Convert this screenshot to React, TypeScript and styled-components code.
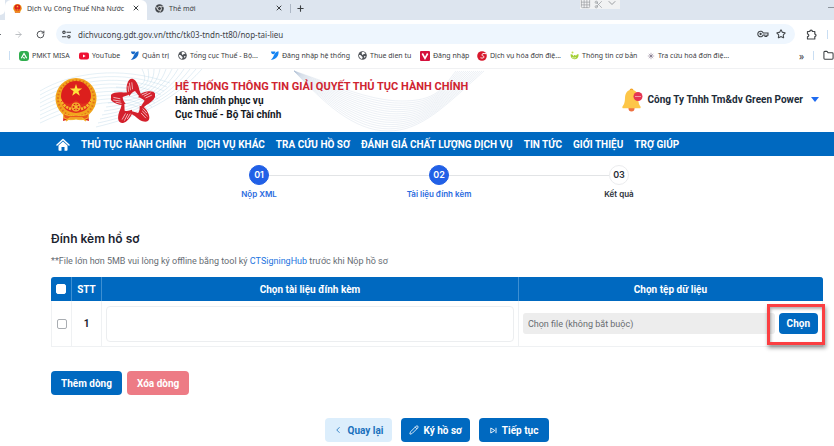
import React from "react";
import styled, { createGlobalStyle } from "styled-components";
import {
  ChevronDown,
  ChevronLeft,
  Folder,
  Pencil,
  Plus,
  RotateCw,
  Star,
  X,
  ArrowRight,
  Scissors,
  Grid3x3,
} from "lucide-react";

const BLUE = "#0069c0";
const ACCENT = "#2160e6";
const UI_FONT = '"Noto Sans", sans-serif';
const PAGE_FONT = 'Roboto, sans-serif';
const TITLE_FONT = 'Inter, sans-serif';

const GlobalStyle = createGlobalStyle`
  * { box-sizing: border-box; }
  body { margin: 0; background: #fff; font-family: ${PAGE_FONT}; color: #1c2430; overflow-x: hidden; }
  button, input { font-family: inherit; }
  button { cursor: pointer; border: 0; padding: 0; background: none; color: inherit; }
  a { text-decoration: none; color: inherit; }
  svg { display: block; flex: none; }
`;

/* ---------- browser frame ---------- */

const TabStrip = styled.div`
  position: relative;
  display: flex;
  align-items: stretch;
  height: 20px;
  background: #dde5ef;
  font-family: ${UI_FONT};
  font-size: 7px;
  color: #3c4043;
`;

const TabEdge = styled.div`
  width: 5px;
  background: #fff;
  border-radius: 0 0 5px 0;
  height: 15px;
`;

const Tab = styled.div<{ $active?: boolean }>`
  display: flex;
  align-items: center;
  gap: 5px;
  width: ${(p) => (p.$active ? 142 : 143)}px;
  padding: 0 7px 4px 8px;
  background: ${(p) => (p.$active ? "#fff" : "transparent")};
  border-radius: 6px 6px 0 0;
  white-space: nowrap;
`;

const TabTitle = styled.span`
  flex: 1;
`;

const TabDivider = styled.span`
  width: 1px;
  height: 9px;
  margin: 4px 5px 0 0;
  background: #aeb8c6;
`;

const IconButton = styled.button`
  display: flex;
  align-items: center;
  justify-content: center;
`;

const NewTab = styled(IconButton)`
  height: 16px;
`;

const CaptureTools = styled.div`
  position: absolute;
  top: 0;
  right: 214px;
  display: flex;
  align-items: flex-end;
  gap: 3px;
  width: 40px;
  height: 9px;
  overflow: hidden;
  background: #f1f2f3;
  color: #9a9da1;
`;

const MinimizeMark = styled.span`
  position: absolute;
  right: 0;
  top: 7px;
  width: 6px;
  height: 1px;
  background: #8d949c;
`;

const AddressRow = styled.div`
  display: flex;
  align-items: center;
  height: 28px;
  font-family: ${UI_FONT};
  color: #45494d;
`;

const NavButtons = styled.div`
  display: flex;
  align-items: center;
  gap: 13px;
  width: 56px;
`;

const BackEdge = styled.span`
  width: 1px;
  height: 1px;
  background: #6b7075;
`;

const AddressBar = styled.div`
  flex: 1;
  display: flex;
  align-items: center;
  gap: 7px;
  height: 20px;
  padding: 0 9px 0 6px;
  border-radius: 10px;
  background: #eef6fe;
`;

const AddressInput = styled.input`
  flex: 1;
  min-width: 0;
  padding: 0;
  border: 0;
  background: none;
  font-size: 8px;
  color: #3f4347;
  outline: none;
`;

const AddressSide = styled.div`
  display: flex;
  align-items: center;
  gap: 10px;
  width: 39px;
  padding-left: 11px;
`;

const VBar = styled.span`
  width: 1px;
  height: 9px;
  background: #c9def3;
`;

const BookmarkBar = styled.nav`
  display: flex;
  align-items: center;
  height: 15px;
  padding-left: 9px;
  font-family: ${UI_FONT};
  font-size: 7px;
  color: #3c4043;
`;

const BookmarkList = styled.div`
  display: flex;
  margin-left: 9px;
`;

const Bookmark = styled.a<{ $slot: number }>`
  display: flex;
  align-items: center;
  gap: 3px;
  width: ${(p) => p.$slot}px;
  white-space: nowrap;
`;

const BookmarkEnd = styled.div`
  display: flex;
  align-items: center;
  gap: 9px;
  margin-left: auto;
  font-size: 10px;
`;

/* ---------- site header ---------- */

const Header = styled.header`
  position: relative;
  display: flex;
  align-items: center;
  height: 64px;
  margin-top: 5px;
  padding: 0 15px 0 54px;
  border-top: 1px solid #f0f1f3;
`;

const WaveLayer = styled.div`
  position: absolute;
  inset: 0;
  overflow: hidden;
  pointer-events: none;
`;

const Logos = styled.div`
  position: relative;
  display: flex;
  gap: 13px;
  width: 121px;
`;

const SiteName = styled.div`
  position: relative;
  flex: 1;
  font-size: 10px;
  line-height: 14px;
  font-weight: 700;
  color: #14181e;
  white-space: nowrap;
`;

const SiteTitle = styled.h1`
  margin: 0;
  font-size: 11px;
  line-height: 14px;
  font-weight: 700;
  color: #cf2430;
`;

const Account = styled.button`
  position: relative;
  display: flex;
  align-items: center;
  gap: 5px;
  padding-bottom: 2px;
  font-size: 10px;
  font-weight: 700;
  color: #222c39;
  white-space: nowrap;
`;

const Caret = styled.span`
  margin-left: 3px;
  border: 4px solid transparent;
  border-top: 5px solid #1f6bf0;
  border-bottom: 0;
`;

const MainNav = styled.nav`
  display: flex;
  align-items: center;
  gap: 11px;
  height: 24px;
  padding-left: 56px;
  background: ${BLUE};
  color: #fff;
  font-size: 10px;
  font-weight: 700;
  white-space: nowrap;
`;

/* ---------- page body ---------- */

const Main = styled.main`
  padding: 9px 11px 0 51px;
`;

const Steps = styled.ol`
  display: grid;
  grid-template-columns: repeat(3, 180px);
  justify-content: center;
  margin: 0;
  padding: 0 0 0 4px;
  list-style: none;
  font-family: ${TITLE_FONT};
`;

const Step = styled.li<{ $done: boolean }>`
  display: grid;
  grid-template-columns: 1fr auto 1fr;
  align-items: center;
  row-gap: 3px;
  text-align: center;
  font-size: 8px;
  line-height: 12px;
  font-weight: 600;
  color: ${(p) => (p.$done ? "#2a6be0" : "#2a3038")};
`;

const StepLine = styled.span<{ $hidden?: boolean }>`
  height: 1px;
  background: ${(p) => (p.$hidden ? "transparent" : "#e2e4e6")};
`;

const StepDot = styled.span<{ $done: boolean }>`
  display: flex;
  align-items: center;
  justify-content: center;
  width: 20px;
  height: 20px;
  border-radius: 50%;
  font-size: 9px;
  background: ${(p) => (p.$done ? ACCENT : "#fff")};
  border: 1px solid ${(p) => (p.$done ? ACCENT : "#ebecee")};
  color: ${(p) => (p.$done ? "#fff" : "#2a3038")};
`;

const StepLabel = styled.span`
  grid-column: 1 / -1;
`;

const SectionTitle = styled.h2`
  margin: 31px 0 0;
  font-family: ${TITLE_FONT};
  font-size: 12px;
  line-height: 16px;
  font-weight: 600;
`;

const Note = styled.p`
  margin: 7px 0 9px;
  font-size: 9px;
  line-height: 14px;
  color: #666c73;
  a { color: #1d74e0; }
`;

const FileTable = styled.table`
  width: 100%;
  table-layout: fixed;
  border-collapse: separate;
  border-spacing: 0;
  font-size: 10px;
  font-weight: 700;
`;

const HeadCell = styled.th<{ $width?: string }>`
  width: ${(p) => p.$width ?? "auto"};
  height: 24px;
  padding: 0;
  background: ${BLUE};
  color: #fff;
  border-right: 1px solid #3d8fd2;
  &:first-child { border-top-left-radius: 3px; }
  &:last-child { border-top-right-radius: 3px; border-right-color: ${BLUE}; }
`;

const Cell = styled.td`
  height: 46px;
  padding: 0 4px;
  text-align: center;
  border-right: 1px solid #eff1f3;
  border-bottom: 1px solid #eff1f3;
  &:first-child { border-left: 1px solid #eff1f3; }
`;

const CheckBox = styled.input<{ $light?: boolean }>`
  appearance: none;
  display: block;
  width: 10px;
  height: 10px;
  margin: 0 auto;
  border: 1px solid ${(p) => (p.$light ? "#fff" : "#a9adb2")};
  border-radius: 2px;
  background: #fff;
  &:checked { background: #5b9bd8; }
`;

const DocInput = styled.input`
  display: block;
  width: 100%;
  height: 36px;
  border: 1px solid #eceef0;
  border-radius: 4px;
  background: #fff;
`;

const FilePicker = styled.div`
  display: flex;
  align-items: center;
`;

const FileInput = styled.input`
  flex: 1;
  min-width: 0;
  height: 21px;
  padding: 0 5px;
  border: 0;
  border-radius: 3px;
  background: #ededed;
  font-size: 9px;
  &::placeholder { color: #686c70; opacity: 1; }
`;

const ChooseWrap = styled.div`
  position: relative;
  padding-left: 4px;
`;

const Button = styled.button<{ $tone?: "primary" | "danger" | "soft"; $height?: number; $pad?: number }>`
  display: inline-flex;
  align-items: center;
  justify-content: center;
  gap: 5px;
  height: ${(p) => p.$height ?? 24}px;
  padding: 0 ${(p) => p.$pad ?? 10}px;
  border-radius: 4px;
  font-size: 10px;
  font-weight: 700;
  white-space: nowrap;
  color: ${(p) => (p.$tone === "soft" ? "#1a71bd" : "#fff")};
  background: ${(p) => (p.$tone === "danger" ? "#ed7b85" : p.$tone === "soft" ? "#dceefc" : BLUE)};
`;

const Highlight = styled.span`
  position: absolute;
  inset: -9px -7px -11px -8px;
  border: 3px solid #fb3f42;
  box-shadow: 1px 3px 4px rgba(0, 0, 0, 0.4), inset 1px 2px 3px rgba(0, 0, 0, 0.3);
  pointer-events: none;
`;

const RowActions = styled.div`
  display: flex;
  gap: 5px;
  margin-top: 24px;
`;

const FooterActions = styled.div`
  display: flex;
  justify-content: center;
  gap: 9px;
  margin-top: 23px;
`;

/* ---------- drawings ---------- */

const starPoints = (cx: number, cy: number, r: number, inner = 0.39) =>
  Array.from({ length: 10 }, (_, i) => {
    const a = (Math.PI / 5) * i - Math.PI / 2;
    const k = i % 2 ? r * inner : r;
    return `${(cx + k * Math.cos(a)).toFixed(2)},${(cy + k * Math.sin(a)).toFixed(2)}`;
  }).join(" ");

const Emblem = ({ size = 44 }: { size?: number }) => (
  <svg width={size} height={size} viewBox="0 0 44 44" aria-hidden>
    <path d="M10 35h24l1 8-7-2h-12l-7 2z" fill="#d9231c" />
    <circle cx="22" cy="20.5" r="20.5" fill="#f1a51d" />
    <circle cx="22" cy="20.5" r="18" fill="none" stroke="#e2701b" strokeWidth="2" strokeDasharray="1.5 2" />
    <circle cx="22" cy="18" r="15" fill="#dc1f1d" />
    <polygon points={starPoints(22, 12.5, 6.5)} fill="#ffe33b" />
    <path d="M6 21c3 10 7 13 16 14 9-1 13-4 16-14-3 3-8 6-12 4l-4-3-4 3c-4 2-9-1-12-4z" fill="#e2311d" />
    <path d="M6 21c3 7 8 9 11 10M38 21c-3 7-8 9-11 10" fill="none" stroke="#f7b92b" strokeWidth="2.5" strokeDasharray="2.5 .8" />
    <g fill="none" stroke="#f7c02f" strokeWidth="1.2">
      <circle cx="22" cy="29" r="4" fill="#d9231c" />
      <path d="M18.5 26.500l7 5M25.500 26.500l-7 5M22 25v8" />
    </g>
    <path d="M9 35c4 3 8 3 13 2 5 1 9 1 13-2l-1 5c-4 2-8 2-12 1-4 1-8 1-12-1z" fill="#ea5a1d" stroke="#f5b629" strokeWidth="1" />
    <path d="M12 43l4-3h12l4 3" fill="none" stroke="#f5b629" strokeWidth="1.500" />
  </svg>
);

const HandsStar = () => (
  <svg width="44" height="46" viewBox="0 0 44 46" aria-hidden>
    {[0, 72, 144, 216, 288].map((deg) => (
      <g key={deg} transform={`rotate(${deg} 22 24.5)`}>
        <path d="M16.200 6C17.200 2 19.500 .2 22 .9C25.800 2.500 27.800 8 28.500 12.500L31 18.800L27.800 17.800L24 13C22 13.600 20 15.500 18.500 18L16 14.500C15.400 11.500 15.400 8.500 16.200 6z" fill="#d4202c" />
        <path d="M18.300 4.800l1.200 7.500M20.800 4.300l.8 7M17 7.800l.6 6" stroke="#fff" strokeWidth=".6" fill="none" />
      </g>
    ))}
  </svg>
);

const Waves = () => (
  <svg width="560" height="63" viewBox="0 0 560 63" aria-hidden>
    <g fill="none" stroke="#a9cbe0" strokeWidth=".6">
      {Array.from({ length: 11 }, (_, i) => (
        <path
          key={i}
          opacity=".55"
          d={`M${96 + i * 2} ${58 - i * 4}C${130 + i} ${50 - i * 3} ${170 - i * 2} ${36 - i * 2} ${202 - i * 6} 0`}
        />
      ))}
      {Array.from({ length: 9 }, (_, i) => (
        <path key={i} opacity=".5" d={`M40 ${22 + i * 4}C${70 + i * 3} ${4 + i * 3} ${120 + i * 2} ${-4 + i * 4} ${170 - i * 3} ${14 + i * 4}`} />
      ))}
    </g>
    <g fill="none" stroke="#b3c4d6" strokeWidth=".5">
      {Array.from({ length: 15 }, (_, i) => {
        const t = i / 14;
        return (
          <path
            key={i}
            opacity=".5"
            d={`M294 2C${330 - 6 * t} ${14 + 20 * t} ${368 - 14 * t} ${32 + 30 * t} ${402 - 14 * t} ${32 + 30 * t}S${442 + 4 * t} ${20 + 16 * t} ${456 + 28 * t} 2`}
          />
        );
      })}
    </g>
  </svg>
);

const Bell = () => (
  <svg width="21" height="24" viewBox="0 0 21 24" aria-hidden>
    <circle cx="9.500" cy="20.500" r="3" fill="#ee7040" />
    <circle cx="9.500" cy="2.500" r="2" fill="#f4a62a" />
    <path d="M9.500 2C5 2 3.300 5.500 3 10c-.2 5-1 6.500-2.500 8.500-.5 1 0 1.800 1 1.800h16c1 0 1.500-.8 1-1.800-1.500-2-2-3.500-2.300-8.500C16 5.500 14 2 9.500 2z" fill="#fdc648" />
    <circle cx="16" cy="8.500" r="4.500" fill="#e53552" />
    <path d="M13.500 8.500h5" stroke="#fff" strokeWidth="1" strokeDasharray="1 1" />
  </svg>
);

const HomeIcon = () => (
  <svg width="14" height="13" viewBox="0 0 14 13" aria-hidden>
    <path d="M1 7l6-5.500L13 7" fill="none" stroke="#fff" strokeWidth="1.500" strokeLinecap="round" strokeLinejoin="round" />
    <path d="M2.500 7.500L7 3.600l4.500 3.900V12a.7.7 0 0 1-.7.7H8.500V9h-3v3.700H3.200a.7.7 0 0 1-.7-.7z" fill="#fff" />
  </svg>
);

const GlobeIcon = () => (
  <svg width="9" height="9" viewBox="0 0 9 9" aria-hidden>
    <circle cx="4.500" cy="4.500" r="4.300" fill="#505459" />
    <path d="M1 4c1.500-.3 2.300.4 2.600 1.300.2.600 1.200.5 1 1.300L4 8C2 7.500 1 6 1 4zM4 1.200c1.500-.5 2.800.3 3.500 1.400-.8.600-2 .2-2.200 1-.3.600-1 .4-1.200-.1C3.800 2.800 3.400 2 4 1.200zM6 5l1.700.2L6.500 7z" fill="#fff" />
  </svg>
);

const ChromeIcon = () => (
  <svg width="9" height="9" viewBox="0 0 9 9" aria-hidden>
    <circle cx="4.500" cy="4.500" r="4.300" fill="#44484d" />
    <circle cx="4.500" cy="4.500" r="2" fill="#44484d" stroke="#fff" strokeWidth=".7" />
    <path d="M4.500 2.400h4M2.700 5.600L.8 2.400M6.300 5.600L4.500 8.800" stroke="#fff" strokeWidth=".6" />
  </svg>
);

const PmktIcon = () => (
  <svg width="10" height="10" viewBox="0 0 10 10" aria-hidden>
    <rect width="10" height="10" rx="3" fill="#2fae4e" />
    <path d="M2.300 7.200L5 2.400l2.700 4.800M4 6.500l2 .8" fill="none" stroke="#fff" strokeWidth="1.200" />
  </svg>
);

const YouTubeIcon = () => (
  <svg width="10" height="8" viewBox="0 0 10 8" aria-hidden>
    <rect y=".5" width="10" height="7" rx="2" fill="#ee1133" />
    <path d="M4 2.500v3L6.700 4z" fill="#fff" />
  </svg>
);

const SwooshIcon = ({ color }: { color: string }) => (
  <svg width="9" height="9" viewBox="0 0 9 9" aria-hidden>
    <path d="M1 .5h4.300C5.300 2 4.600 3 3.400 3.300 2 3.400 1.200 2.200 1 .5z" fill={color} />
    <path d="M8.500.3C9 3.500 7.500 8.300.8 8.900 2.200 7.800 3 6.500 3.700 4.800 4.500 2.600 6 .8 8.500.3z" fill={color} />
  </svg>
);

const VIcon = () => (
  <svg width="10" height="10" viewBox="0 0 10 10" aria-hidden>
    <rect width="10" height="10" rx="1" fill="#d5103c" />
    <path d="M2.300 2.500L5 7.300l2.700-4.800" fill="none" stroke="#fff" strokeWidth="1.600" />
  </svg>
);

const SIcon = () => (
  <svg width="10" height="10" viewBox="0 0 10 10" aria-hidden>
    <circle cx="5" cy="5" r="4.800" fill="#d8182c" />
    <path d="M9 2.700C6.500 2 4.500 2.800 5 4.200c.4 1 2.500.8 2 2-.4 1-2 1-3.500.6" fill="none" stroke="#fff" strokeWidth="1" />
  </svg>
);

const SproutIcon = () => (
  <svg width="9" height="9" viewBox="0 0 9 9" aria-hidden>
    <path d="M.5 3.500C2 3 3 4 3.500 5.500 4 3.500 5.500 3.800 6 5c.5-1.500 1.500-2 2.700-1.500C8.500 7 6.500 8.500 4.200 8.300 2 8 .6 6.500.5 3.500z" fill="#a3cf35" />
    <circle cx="2.500" cy="1.500" r="1" fill="#c3dd4d" />
    <path d="M2 6.300c1 .8 2.500.9 4 .2" stroke="#fff" strokeWidth=".6" fill="none" />
  </svg>
);

const FlowerIcon = () => (
  <svg width="8" height="8" viewBox="0 0 8 8" aria-hidden>
    <path d="M4 .8v6.400M.8 4h6.400M1.800 1.800l4.400 4.400M6.200 1.800L1.800 6.200" stroke="#a99fae" strokeWidth=".8" />
    <circle cx="4" cy="4" r="1" fill="#7d7488" />
  </svg>
);

const TuneIcon = () => (
  <svg width="9" height="9" viewBox="0 0 9 9" aria-hidden>
    <g fill="none" stroke="#3f4347" strokeWidth="1.100">
      <circle cx="2" cy="2.300" r="1.200" />
      <path d="M4.500 2.300H9M0 6.700h4.500" />
      <circle cx="6.900" cy="6.700" r="1.200" />
    </g>
  </svg>
);

const KeyIcon = () => (
  <svg width="12" height="8" viewBox="0 0 12 8" aria-hidden>
    <g fill="none" stroke="#3f4347" strokeWidth="1.100">
      <path d="M6.200 3H11v2.200H9.800v1.300H8V5H6.200a2.800 2.800 0 1 1 0-2z" />
      <circle cx="3.600" cy="4" r=".6" />
    </g>
  </svg>
);

const ExtensionIcon = () => (
  <svg width="11" height="11" viewBox="0 0 11 11" aria-hidden>
    <path
      d="M1.500 2.500h2.300a1.300 1.300 0 0 1 2.600 0h2.400v2.600a1.200 1.200 0 0 1 0 2.400V10H1.500V7.600a1.300 1.300 0 0 0 0-2.600z"
      fill="none"
      stroke="#45494d"
      strokeWidth="1.200"
      strokeLinejoin="round"
    />
  </svg>
);

const SkipIcon = () => (
  <svg width="7" height="7" viewBox="0 0 7 7" aria-hidden>
    <path d="M.8 1v5L4.800 3.500zM6 .8v5.400" fill="none" stroke="#fff" strokeWidth=".9" />
  </svg>
);

/* ---------- data ---------- */

const bookmarks: { label: string; slot: number; icon: React.ReactNode }[] = [
  { label: "PMKT MISA", slot: 60, icon: <PmktIcon /> },
  { label: "YouTube", slot: 51, icon: <YouTubeIcon /> },
  { label: "Quản trị", slot: 48, icon: <SwooshIcon color="#1769c8" /> },
  { label: "Tổng cục Thuế - Bộ...", slot: 92, icon: <GlobeIcon /> },
  { label: "Đăng nhập hệ thống", slot: 88, icon: <SwooshIcon color="#1684f2" /> },
  { label: "Thue dien tu", slot: 62, icon: <GlobeIcon /> },
  { label: "Đăng nhập", slot: 57, icon: <VIcon /> },
  { label: "Dịch vụ hóa đơn điệ...", slot: 93, icon: <SIcon /> },
  { label: "Thông tin cơ bản", slot: 77, icon: <SproutIcon /> },
  { label: "Tra cứu hoá đơn điệ...", slot: 90, icon: <FlowerIcon /> },
];

const menu = [
  "THỦ TỤC HÀNH CHÍNH",
  "DỊCH VỤ KHÁC",
  "TRA CỨU HỒ SƠ",
  "ĐÁNH GIÁ CHẤT LƯỢNG DỊCH VỤ",
  "TIN TỨC",
  "GIỚI THIỆU",
  "TRỢ GIÚP",
];

const steps = [
  { no: "01", label: "Nộp XML", done: true },
  { no: "02", label: "Tài liệu đính kèm", done: true },
  { no: "03", label: "Kết quả", done: false },
];

export default function App() {
  return (
    <>
      <GlobalStyle />
      <TabStrip>
        <TabEdge />
        <Tab $active>
          <Emblem size={9} />
          <TabTitle>Dịch Vụ Công Thuế Nhà Nước</TabTitle>
          <IconButton aria-label="Đóng thẻ"><X size={8} strokeWidth={3} /></IconButton>
        </Tab>
        <Tab>
          <ChromeIcon />
          <TabTitle>Thẻ mới</TabTitle>
          <IconButton aria-label="Đóng thẻ"><X size={8} strokeWidth={3} /></IconButton>
        </Tab>
        <TabDivider />
        <NewTab aria-label="Thẻ mới"><Plus size={9} strokeWidth={3} /></NewTab>
        <CaptureTools>
          <Grid3x3 size={11} strokeWidth={1.5} />
          <Scissors size={9} />
          <ChevronDown size={12} />
        </CaptureTools>
        <MinimizeMark />
      </TabStrip>

      <AddressRow>
        <NavButtons>
          <BackEdge />
          <ArrowRight size={9} color="#a7abb0" />
          <IconButton aria-label="Tải lại"><RotateCw size={9} strokeWidth={2.5} /></IconButton>
        </NavButtons>
        <AddressBar>
          <TuneIcon />
          <AddressInput aria-label="Địa chỉ" defaultValue="dichvucong.gdt.gov.vn/tthc/tk03-tndn-tt80/nop-tai-lieu" />
          <KeyIcon />
          <Star size={10} strokeWidth={2.5} />
        </AddressBar>
        <AddressSide>
          <ExtensionIcon />
          <VBar />
        </AddressSide>
      </AddressRow>

      <BookmarkBar aria-label="Dấu trang">
        <VBar />
        <BookmarkList>
          {bookmarks.map((b) => (
            <Bookmark key={b.label} href="#" $slot={b.slot}>
              {b.icon}
              {b.label}
            </Bookmark>
          ))}
        </BookmarkList>
        <BookmarkEnd>
          <span>»</span>
          <VBar />
          <Folder size={11} strokeWidth={2.3} />
        </BookmarkEnd>
      </BookmarkBar>

      <Header>
        <WaveLayer><Waves /></WaveLayer>
        <Logos>
          <Emblem />
          <HandsStar />
        </Logos>
        <SiteName>
          <SiteTitle>HỆ THỐNG THÔNG TIN GIẢI QUYẾT THỦ TỤC HÀNH CHÍNH</SiteTitle>
          <div>Hành chính phục vụ</div>
          <div>Cục Thuế - Bộ Tài chính</div>
        </SiteName>
        <Account>
          <Bell />
          Công Ty Tnhh Tm&amp;dv Green Power
          <Caret />
        </Account>
      </Header>

      <MainNav>
        <a href="#" aria-label="Trang chủ"><HomeIcon /></a>
        {menu.map((m) => (
          <a key={m} href="#">{m}</a>
        ))}
      </MainNav>

      <Main>
        <Steps>
          {steps.map((s, i) => (
            <Step key={s.no} $done={s.done}>
              <StepLine $hidden={i === 0} />
              <StepDot $done={s.done}>{s.no}</StepDot>
              <StepLine $hidden={i === steps.length - 1} />
              <StepLabel>{s.label}</StepLabel>
            </Step>
          ))}
        </Steps>

        <SectionTitle>Đính kèm hồ sơ</SectionTitle>
        <Note>
          **File lớn hơn 5MB vui lòng ký offline bằng tool ký <a href="#">CTSigningHub</a> trước khi Nộp hồ sơ
        </Note>

        <FileTable>
          <thead>
            <tr>
              <HeadCell $width="21px"><CheckBox type="checkbox" $light aria-label="Chọn tất cả" /></HeadCell>
              <HeadCell $width="30px">STT</HeadCell>
              <HeadCell $width="54%">Chọn tài liệu đính kèm</HeadCell>
              <HeadCell>Chọn tệp dữ liệu</HeadCell>
            </tr>
          </thead>
          <tbody>
            <tr>
              <Cell><CheckBox type="checkbox" aria-label="Chọn dòng 1" /></Cell>
              <Cell>1</Cell>
              <Cell><DocInput aria-label="Tài liệu đính kèm" /></Cell>
              <Cell>
                <FilePicker>
                  <FileInput readOnly aria-label="Tệp dữ liệu" placeholder="Chọn file (không bắt buộc)" />
                  <ChooseWrap>
                    <Button $height={21} $pad={8}>Chọn</Button>
                    <Highlight />
                  </ChooseWrap>
                </FilePicker>
              </Cell>
            </tr>
          </tbody>
        </FileTable>

        <RowActions>
          <Button>Thêm dòng</Button>
          <Button $tone="danger">Xóa dòng</Button>
        </RowActions>

        <FooterActions>
          <Button $tone="soft" $pad={8}><ChevronLeft size={10} />Quay lại</Button>
          <Button $pad={8}><Pencil size={10} />Ký hồ sơ</Button>
          <Button $pad={11}><SkipIcon />Tiếp tục</Button>
        </FooterActions>
      </Main>
    </>
  );
}
